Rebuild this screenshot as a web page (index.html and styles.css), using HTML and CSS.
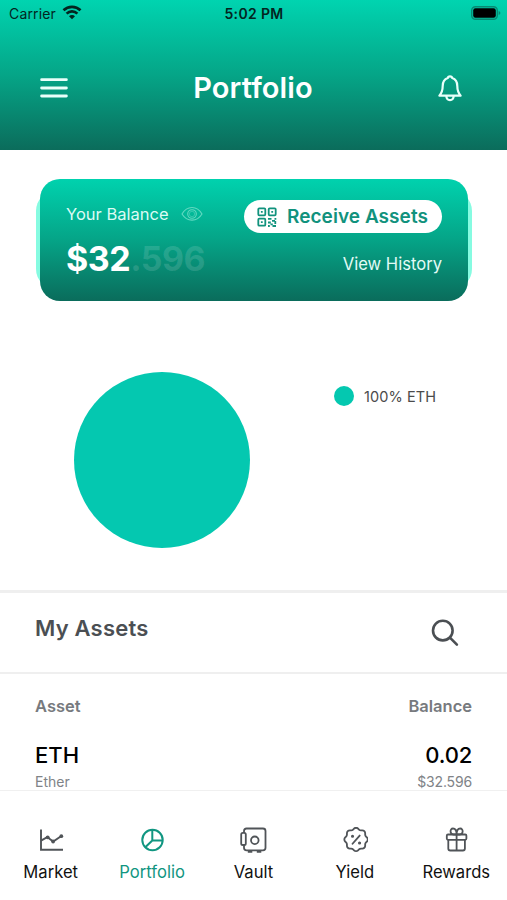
FILE: index.html
```html
<!DOCTYPE html>
<html lang="en">
<head>
<meta charset="utf-8">
<meta name="viewport" content="width=device-width, initial-scale=1">
<title>Portfolio</title>
<link rel="stylesheet" href="styles.css">
</head>
<body>
<header class="header">
  <div class="status">
    <div class="carrier"><span>Carrier</span>
      <svg width="20" height="15" viewBox="0 0 20 15" fill="none" stroke="#03251f" stroke-width="2.7"><path d="M1.5 5.3a12.2 12.2 0 0 1 17 0M4.6 8.6a7.8 7.8 0 0 1 10.8 0"/><path d="M10 14.3l-3-3a4.2 4.2 0 0 1 6 0z" fill="#03251f" stroke="none"/></svg>
    </div>
    <time class="time">5:02 PM</time>
    <svg class="battery" width="30" height="14" viewBox="0 0 30 14"><rect x=".7" y=".7" width="25.6" height="12.6" rx="3.8" fill="none" stroke="#078a73" stroke-width="1.4"/><rect x="2.2" y="2.2" width="22.6" height="9.6" rx="2.2" fill="#000"/><path d="M27.6 5v4q1.8-.6 1.8-2t-1.8-2" fill="#078a73"/></svg>
  </div>
  <div class="titlebar">
    <svg class="menu" width="28" height="20" viewBox="0 0 28 20" stroke="#e9fffa" stroke-width="2.8" stroke-linecap="round"><path d="M1.6 1.700h24.800M1.600 10h24.800M1.600 18h24.800"/></svg>
    <h1 class="title">Portfolio</h1>
    <svg class="bell" width="24" height="27" viewBox="0 0 24 27" fill="none" stroke="#e9fffa" stroke-width="2.2" stroke-linejoin="round" stroke-linecap="round"><path d="M9.800 3Q10 1.300 12 1.300T14.200 3C18 4.200 19.300 7.100 19.300 11c0 5.300 1.300 7.300 3.300 9.700H1.400C3.400 18.300 4.700 16.300 4.700 11 4.700 7.100 6 4.200 9.800 3zM8.300 21c.3 5.500 7.100 5.500 7.400 0"/></svg>
  </div>
</header>
<main class="content">
  <section class="balance">
    <div class="card">
      <div class="card-left">
        <div class="label"><span>Your Balance</span>
          <svg width="22" height="16" viewBox="0 0 22 16" fill="none" stroke="#62d9c1" stroke-width="1.1"><path d="M1 8C6-.7 16-.7 21 8 16 16.200 6 16.200 1 8z"/><circle cx="11" cy="8" r="4.300"/><circle cx="11" cy="8" r="2.700" stroke-width=".5"/></svg>
        </div>
        <div class="amount">$32<span>.596</span></div>
      </div>
      <div class="card-right">
        <button class="receive">
          <svg width="20" height="20" viewBox="0 0 20 20" fill="none" stroke="#11927d" stroke-width="1.800"><rect x="1.300" y="1.300" width="7" height="7" rx="1"/><rect x="11.700" y="1.300" width="7" height="7" rx="1"/><rect x="1.300" y="11.700" width="7" height="7" rx="1"/><path d="M3.900 4.800h1.800M14.300 4.800h1.800M3.900 15.200h1.800M11 11.800h3.500M17.500 11.800h1.800M15 13.900h3M11 15.500h2.800M18.300 14v3M13.500 17.300h2.300M11 19h1.800M15.500 19h3.500"/></svg>
          <span>Receive Assets</span>
        </button>
        <a class="history">View History</a>
      </div>
    </div>
  </section>
  <section class="chart">
    <div class="pie"></div>
    <div class="legend"><i></i><span>100% ETH</span></div>
  </section>
  <section class="assets-head">
    <h2>My Assets</h2>
    <svg width="28" height="28" viewBox="0 0 28 28" fill="none" stroke="#4b4f53" stroke-width="2.600" stroke-linecap="round"><circle cx="11.800" cy="11.600" r="9.800"/><path d="M18.900 18.700l7 7"/></svg>
  </section>
  <section class="assets">
    <div class="row columns"><span>Asset</span><span>Balance</span></div>
    <div class="row main"><span>ETH</span><span class="quantity">0.02</span></div>
    <div class="row sub"><span>Ether</span><span class="value">$32.596</span></div>
  </section>
</main>
<nav class="tabs">
  <a class="tab">
    <svg width="26" height="26" viewBox="0 0 26 26" fill="none" stroke="#505458" stroke-width="1.900"><path d="M3 2.500v20.200h22M3.500 13.300l5.700-3.200 6 4.500 7.800-5.300"/><g fill="#505458" stroke="none"><circle cx="9.700" cy="10.300" r="1.900"/><circle cx="15.100" cy="14.500" r="1.900"/><circle cx="23.300" cy="9.200" r="1.900"/></g></svg>
    <span>Market</span>
  </a>
  <a class="tab active">
    <svg width="26" height="26" viewBox="0 0 26 26" fill="none" stroke="#119681" stroke-width="2"><circle cx="13.500" cy="13" r="10.200"/><path d="M13.300 3v10.500H23.500M13.300 13.500L6 20.500"/></svg>
    <span>Portfolio</span>
  </a>
  <a class="tab">
    <svg width="28" height="26" viewBox="0 0 28 26" fill="none" stroke="#505458" stroke-width="1.800"><path d="M5 6V4Q5 1.500 7.500 1.500H24Q26.500 1.500 26.500 4V20.800Q26.500 23.300 24 23.300H7.500Q5 23.300 5 20.800V18"/><rect x="2.200" y="5.800" width="4.600" height="12.200" rx="1.600"/><circle cx="15.800" cy="13.300" r="3.800"/><path d="M8.800 24.800h4.500M17.800 24.800h4.500" stroke-width="2"/></svg>
    <span>Vault</span>
  </a>
  <a class="tab">
    <svg width="26" height="26" viewBox="1.200 2.400 20 20" fill="none" stroke="#505458" stroke-width="1.400" stroke-linecap="round"><path d="M5 7.200a2.200 2.200 0 0 1 2.200-2.200h1a2.200 2.200 0 0 0 1.550-.64l.7-.7a2.200 2.200 0 0 1 3.120 0l.7.7c.412.41.97.64 1.550.64h1a2.200 2.200 0 0 1 2.200 2.200v1c0 .58.23 1.138.64 1.550l.7.7a2.200 2.200 0 0 1 0 3.120l-.7.7a2.200 2.200 0 0 0-.64 1.550v1a2.200 2.200 0 0 1-2.200 2.200h-1a2.200 2.200 0 0 0-1.550.64l-.7.7a2.200 2.200 0 0 1-3.120 0l-.7-.7a2.200 2.200 0 0 0-1.550-.64h-1a2.200 2.200 0 0 1-2.200-2.200v-1a2.200 2.200 0 0 0-.64-1.550l-.7-.7a2.200 2.200 0 0 1 0-3.120l.7-.7a2.200 2.200 0 0 0 .64-1.550zM14.800 9l-5.500 6.300"/><circle cx="9.300" cy="9.500" r=".5" fill="#505458"/><circle cx="14.700" cy="14.700" r=".5" fill="#505458"/></svg>
    <span>Yield</span>
  </a>
  <a class="tab">
    <svg width="26" height="26" viewBox="0 0 26 26" fill="none" stroke="#505458" stroke-width="1.800" stroke-linejoin="round"><rect x="3.800" y="7.500" width="19.600" height="5.300" rx="1.200"/><path d="M5.300 12.800v8.700q0 2 2 2h12.600q2 0 2-2v-8.700M13.600 8v15.500M13.600 7.500H10.500C6.800 7.500 6.500 1.500 10 1.500c2.500 0 3.600 2 3.600 6C13.600 3.500 14.700 1.500 17.200 1.500c3.500 0 3.200 6-.5 6z"/></svg>
    <span>Rewards</span>
  </a>
</nav>
</body>
</html>
```
FILE: styles.css
```css
* { box-sizing: border-box; }
body {
  margin: 0;
  width: 507px;
  height: 900px;
  overflow: hidden;
  display: flex;
  flex-direction: column;
  background: #fff;
  font-family: Inter, sans-serif;
  color: #000;
}
svg { display: block; flex: none; }
.header {
  height: 150px;
  flex: none;
  background: linear-gradient(#00d4b0, #05a587 50%, #0b6c5b);
}
.status {
  display: grid;
  grid-template-columns: 1fr auto 1fr;
  height: 27px;
  padding: 0 6px 0 9px;
  align-items: center;
  color: #03251f;
}
.carrier { display: flex; align-items: center; gap: 6px; font-size: 14px; letter-spacing: .15px; }
.carrier svg { margin-top: -2px; }
.time { margin-left: -2px; font-size: 14px; font-weight: 600; letter-spacing: .35px; }
.battery { justify-self: end; margin-top: -1px; }
.titlebar {
  display: grid;
  grid-template-columns: 1fr auto 1fr;
  align-items: center;
  height: 122px;
  padding: 0 45px 0 40px;
}
.title { margin: 0 -2px 0 2px; font-size: 29px; font-weight: 600; line-height: 34px; letter-spacing: .1px; color: #fff; }
.bell { justify-self: end; }
.content { flex: 1; min-height: 0; overflow: hidden; }
.balance { padding: 29px 39px 0 40px; }
.card {
  position: relative;
  display: flex;
  justify-content: space-between;
  height: 122px;
  padding: 21px 26px 0;
  border-radius: 20px;
  background: linear-gradient(#00d2ae, #05a487 50%, #0a6c5b);
  color: #fff;
}
.card::before {
  content: "";
  position: absolute;
  z-index: -1;
  inset: 12px -4px;
  border-radius: 20px;
  background: #86fbe1;
}
.label { display: flex; align-items: center; gap: 12px; height: 28px; font-size: 16.5px; color: #dcfbf4; }
.amount { margin-top: 10px; font-size: 34px; font-weight: 700; line-height: 42px; letter-spacing: -.5px; }
.amount span { color: rgba(255, 255, 255, .13); }
.card-right { display: flex; flex-direction: column; align-items: flex-end; }
.receive {
  display: flex;
  align-items: center;
  gap: 10px;
  width: 198px;
  height: 33px;
  padding: 0 0 0 13px;
  border: 0;
  border-radius: 17px;
  background: #fff;
  color: #11927d;
  font: 600 19px Inter, sans-serif;
  letter-spacing: .05px;
  white-space: nowrap;
}
.history { margin-top: 21px; font-size: 16.6px; line-height: 20px; color: #e2fbf6; }
.chart { display: flex; height: 289px; padding: 71px 0 0 74px; }
.pie { width: 176px; height: 176px; border-radius: 50%; background: #04c8b0; }
.legend { display: flex; align-items: center; gap: 10px; height: 20px; margin: 14px 0 0 84px; font-size: 14.5px; letter-spacing: .1px; color: #4b4b4b; }
.legend i { width: 20px; height: 20px; border-radius: 50%; background: #04c8b0; }
.assets-head {
  display: flex;
  justify-content: space-between;
  height: 84px;
  padding: 22px 48px 0 35px;
  border-top: 3px solid #efefef;
  border-bottom: 2px solid #efefef;
}
.assets-head h2 { margin: 0; font-size: 22px; font-weight: 600; line-height: 27px; letter-spacing: .2px; color: #4b4f53; }
.assets-head svg { margin-top: 4px; }
.row { display: flex; justify-content: space-between; padding: 0 35px; }
.columns { padding-top: 22px; font-size: 16.5px; font-weight: 600; line-height: 20px; color: #777a7e; }
.main { padding-top: 25px; font-size: 22px; font-weight: 500; line-height: 28px; }
.quantity { letter-spacing: -.2px; }
.sub { padding-top: 4px; font-size: 14px; line-height: 18px; color: #808387; }
.value { letter-spacing: -.15px; }
.tabs {
  display: grid;
  grid-template-columns: repeat(5, 1fr);
  flex: none;
  height: 110px;
  padding-top: 36px;
  background: #fff;
  border-top: 1px solid #f0f0f0;
}
.tab { display: flex; flex-direction: column; align-items: center; gap: 9px; font-size: 16.6px; line-height: 20px; color: #111; }
.active { color: #119681; }
```
